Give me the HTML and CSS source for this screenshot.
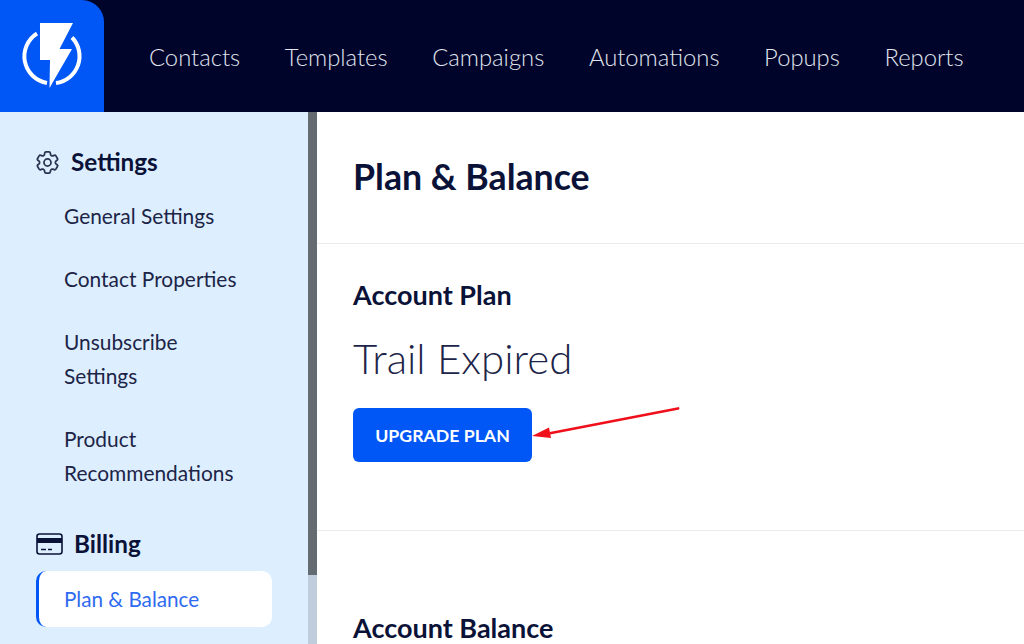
FILE: index.html
```html
<!DOCTYPE html>
<html lang="en">
<head>
<meta charset="utf-8">
<title>Plan &amp; Balance</title>
<link rel="stylesheet" href="styles.css">
</head>
<body>
<header class="topbar">
  <a class="logo" href="#">
    <svg width="104" height="112" viewBox="0 0 104 112">
      <path d="M37 33.5 A27 27 0 0 0 47 83" fill="none" stroke="#fff" stroke-width="4"/>
      <path d="M72 37.5 A27 27 0 0 1 56 83" fill="none" stroke="#fff" stroke-width="4"/>
      <path d="M40 23 H73 L59.5 49 H72 L49.5 88 L50 60 H40 Z" fill="#fff"/>
    </svg>
  </a>
  <nav class="nav">
    <a href="#">Contacts</a>
    <a href="#">Templates</a>
    <a href="#">Campaigns</a>
    <a href="#">Automations</a>
    <a href="#">Popups</a>
    <a href="#">Reports</a>
  </nav>
</header>
<div class="body">
  <aside class="sidebar">
    <div class="side-content">
      <h3 class="side-head settings-head">
        <svg width="23" height="23" viewBox="2.2 2.2 19.6 19.6" fill="none" stroke="#2a3350" stroke-width="1.5" stroke-linejoin="round">
          <path d="M9.594 3.94c.09-.542.56-.94 1.11-.94h2.593c.55 0 1.02.398 1.11.94l.213 1.281c.063.374.313.686.645.87.074.04.147.083.22.127.325.196.72.257 1.075.124l1.217-.456a1.125 1.125 0 0 1 1.37.49l1.296 2.247a1.125 1.125 0 0 1-.26 1.431l-1.003.827c-.293.241-.438.613-.43.992a7.723 7.723 0 0 1 0 .255c-.008.378.137.75.43.991l1.004.827c.424.35.534.955.26 1.43l-1.298 2.247a1.125 1.125 0 0 1-1.369.491l-1.217-.456c-.355-.133-.75-.072-1.076.124a6.47 6.47 0 0 1-.22.128c-.331.183-.581.495-.644.869l-.213 1.281c-.09.543-.56.94-1.11.94h-2.594c-.55 0-1.019-.398-1.11-.94l-.213-1.281c-.062-.374-.312-.686-.644-.87a6.52 6.52 0 0 1-.22-.127c-.325-.196-.72-.257-1.076-.124l-1.217.456a1.125 1.125 0 0 1-1.369-.49l-1.297-2.247a1.125 1.125 0 0 1 .26-1.431l1.004-.827c.292-.24.437-.613.43-.991a6.932 6.932 0 0 1 0-.255c.007-.38-.138-.751-.43-.992l-1.004-.827a1.125 1.125 0 0 1-.26-1.43l1.297-2.247a1.125 1.125 0 0 1 1.37-.491l1.216.456c.356.133.751.072 1.076-.124.072-.044.146-.086.22-.128.332-.183.582-.495.644-.869l.214-1.28Z"/>
          <circle cx="12" cy="12" r="3"/>
        </svg>
        <span>Settings</span>
      </h3>
      <a class="side-link link-general" href="#">General Settings</a>
      <a class="side-link link-contact" href="#">Contact Properties</a>
      <a class="side-link link-unsub" href="#">Unsubscribe Settings</a>
      <a class="side-link link-product" href="#">Product Recommendations</a>
      <h3 class="side-head billing-head">
        <svg width="27" height="22" viewBox="0 0 27 22" fill="none">
          <rect x="1" y="1" width="25" height="20" rx="2.5" stroke="#0b1238" stroke-width="1.6"/>
          <rect x="1" y="5" width="25" height="5" fill="#0b1238"/>
          <path d="M5 16.5h5M12 16.5h4" stroke="#0b1238" stroke-width="1.6"/>
        </svg>
        <span>Billing</span>
      </h3>
      <a class="side-active" href="#">Plan &amp; Balance</a>
    </div>
    <div class="scrollbar"><div class="thumb"></div></div>
  </aside>
  <main class="main">
    <h1 class="title">Plan &amp; Balance</h1>
    <section class="plan">
      <h2 class="sec-title">Account Plan</h2>
      <p class="plan-name">Trail Expired</p>
      <div class="upgrade-row">
        <button class="btn">UPGRADE PLAN</button>
        <svg class="arrow" width="148" height="32" viewBox="0 0 148 32">
          <path d="M146 1.5 L14 27" stroke="#f0101c" stroke-width="2.8" stroke-linecap="round"/>
          <path d="M0 29 L17 20.5 L19 31 Z" fill="#f0101c"/>
        </svg>
      </div>
    </section>
    <section class="balance">
      <h2 class="sec-title">Account Balance</h2>
    </section>
  </main>
</div>
</body>
</html>
```
FILE: styles.css
```css
* { box-sizing: border-box; }
html, body { margin: 0; height: 644px; overflow: hidden; }
body { font-family: Lato, sans-serif; color: #0b1238; background: #fff; }
a { text-decoration: none; color: inherit; }

.topbar { display: flex; height: 112px; background: #00042b; }
.logo { width: 104px; background: #0057f5; border-top-right-radius: 22px; display: block; }
.logo svg { display: block; }
.nav { display: flex; align-items: center; gap: 44.6px; padding: 2px 0 0 45px; color: #e0e5ee; font-size: 23.8px; font-weight: 300; }

.body { display: flex; height: 532px; }
.sidebar { width: 317px; display: flex; background: #ddefff; flex: none; }
.side-content { width: 308px; padding: 36px 36px 0; display: flex; flex-direction: column; }
.scrollbar { width: 9px; background: #bfcddc; }
.thumb { height: 463px; background: #646b71; }

.side-head { margin: 0; display: flex; align-items: center; font-size: 24.3px; font-weight: 700; color: #0b1238; line-height: 28px; }
.settings-head { gap: 12px; }
.billing-head { gap: 11px; margin-top: 41px; }
.side-link { font-size: 20.9px; line-height: 33.5px; padding-left: 28px; color: #1c2447; width: 210px; }
.link-general { margin-top: 23px; }
.link-contact { margin-top: 29px; }
.link-unsub { margin-top: 30px; }
.link-product { margin-top: 30px; }

.side-active { display: flex; align-items: center; margin-top: 13px; height: 56px; width: 236px; padding-left: 25px; background: #fff; border-left: 3px solid #0057f5; border-radius: 10px; color: #2f6bf0; font-size: 20.7px; }

.main { flex: 1; min-width: 0; }
.title { margin: 0; height: 132px; padding: 43px 0 0 36px; border-bottom: 1px solid #e9ebef; font-size: 35.7px; line-height: 44px; font-weight: 700; color: #0b1238; }
.plan { height: 287px; padding: 35px 0 0 36px; border-bottom: 1px solid #e9ebef; }
.sec-title { margin: 0; font-size: 27px; line-height: 32px; font-weight: 700; color: #0b1238; }
.plan-name { margin: 22px 0 0; font-size: 42px; line-height: 50px; font-weight: 300; color: #1c2447; }
.upgrade-row { display: flex; align-items: flex-start; margin-top: 25px; }
.btn { width: 179px; height: 54px; border: 0; border-radius: 6px; background: #0057f5; color: #fff; font-family: inherit; font-size: 17.7px; font-weight: 700; padding: 0; }
.arrow { margin-top: -1px; display: block; }
.balance { padding: 81px 0 0 36px; }
```
